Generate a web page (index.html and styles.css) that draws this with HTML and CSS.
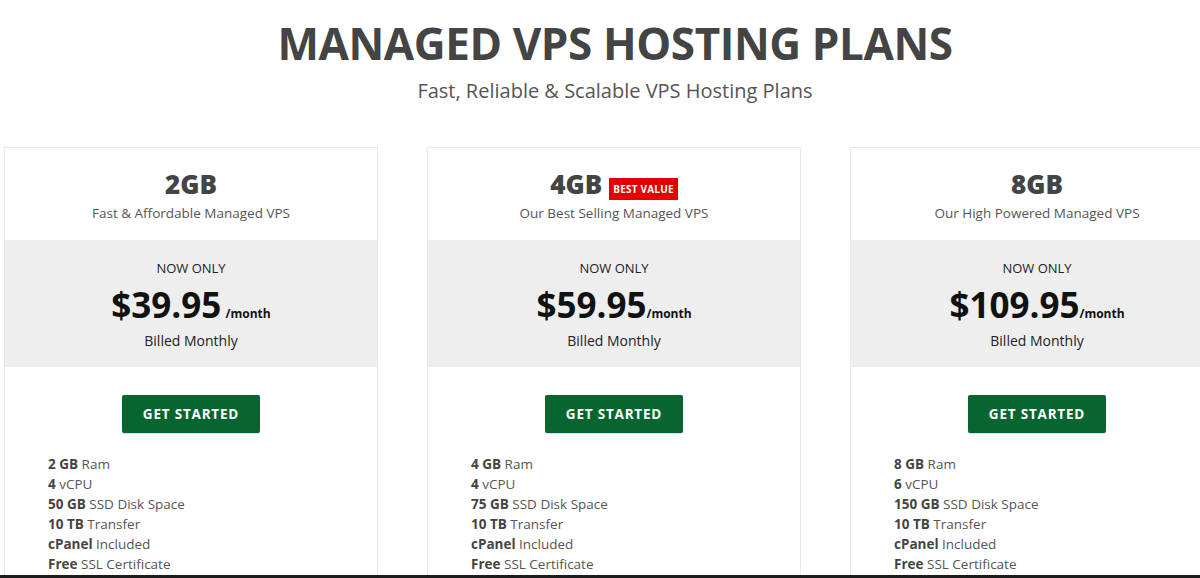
FILE: index.html
```html
<!DOCTYPE html>
<html lang="en">
<head>
<meta charset="utf-8">
<title>Managed VPS Hosting Plans</title>
<link rel="stylesheet" href="styles.css">
</head>
<body>
<main class="page">
  <header class="intro">
    <h1 class="intro-title">MANAGED VPS HOSTING PLANS</h1>
    <p class="intro-sub">Fast, Reliable &amp; Scalable VPS Hosting Plans</p>
  </header>
  <section class="plans">
    <article class="plan">
      <div class="plan-head">
        <h2 class="plan-name">2GB</h2>
        <p class="plan-desc">Fast &amp; Affordable Managed VPS</p>
      </div>
      <div class="plan-price">
        <p class="now">NOW ONLY</p>
        <p class="price"><span class="amount">$39.95</span> <span class="per">/month</span></p>
        <p class="billed">Billed Monthly</p>
      </div>
      <div class="plan-body">
        <a class="btn" href="#">GET STARTED</a>
        <ul class="features">
          <li><b>2 GB</b> Ram</li>
          <li><b>4</b> vCPU</li>
          <li><b>50 GB</b> SSD Disk Space</li>
          <li><b>10 TB</b> Transfer</li>
          <li><b>cPanel</b> Included</li>
          <li><b>Free</b> SSL Certificate</li>
        </ul>
      </div>
    </article>
    <article class="plan">
      <div class="plan-head">
        <h2 class="plan-name">4GB<span class="badge">BEST VALUE</span></h2>
        <p class="plan-desc">Our Best Selling Managed VPS</p>
      </div>
      <div class="plan-price">
        <p class="now">NOW ONLY</p>
        <p class="price"><span class="amount">$59.95</span><span class="per">/month</span></p>
        <p class="billed">Billed Monthly</p>
      </div>
      <div class="plan-body">
        <a class="btn" href="#">GET STARTED</a>
        <ul class="features">
          <li><b>4 GB</b> Ram</li>
          <li><b>4</b> vCPU</li>
          <li><b>75 GB</b> SSD Disk Space</li>
          <li><b>10 TB</b> Transfer</li>
          <li><b>cPanel</b> Included</li>
          <li><b>Free</b> SSL Certificate</li>
        </ul>
      </div>
    </article>
    <article class="plan">
      <div class="plan-head">
        <h2 class="plan-name">8GB</h2>
        <p class="plan-desc">Our High Powered Managed VPS</p>
      </div>
      <div class="plan-price">
        <p class="now">NOW ONLY</p>
        <p class="price"><span class="amount">$109.95</span><span class="per">/month</span></p>
        <p class="billed">Billed Monthly</p>
      </div>
      <div class="plan-body">
        <a class="btn" href="#">GET STARTED</a>
        <ul class="features">
          <li><b>8 GB</b> Ram</li>
          <li><b>6</b> vCPU</li>
          <li><b>150 GB</b> SSD Disk Space</li>
          <li><b>10 TB</b> Transfer</li>
          <li><b>cPanel</b> Included</li>
          <li><b>Free</b> SSL Certificate</li>
        </ul>
      </div>
    </article>
  </section>
</main>
<div class="bottom-bar"></div>
</body>
</html>
```

FILE: styles.css
```css
html, body {
  margin: 0;
  padding: 0;
  overflow: hidden;
  height: 100%;
}
body {
  font-family: "Open Sans", "Liberation Sans", sans-serif;
  background: #fff;
  color: #555;
}
p, h1, h2, ul { margin: 0; padding: 0; }

.page {
  width: 1222px;
  margin-left: 4px;
  padding-top: 15px;
}
.intro {
  text-align: center;
}
.intro-title {
  font-size: 44px;
  line-height: 56px;
  font-weight: 700;
  letter-spacing: -0.4px;
  color: #444;
}
.intro-sub {
  margin-top: 7px;
  font-size: 20px;
  line-height: 26px;
  color: #555;
}

.plans {
  display: flex;
  gap: 49px;
  margin-top: 43px;
}
.plan {
  width: 374px;
  flex: 0 0 374px;
  box-sizing: border-box;
  border: 1px solid #e8e8e8;
  height: 460px;
}
.plan-head {
  text-align: center;
  padding: 21px 0 17px;
}
.plan-name {
  font-size: 26px;
  line-height: 30px;
  font-weight: 800;
  color: #444;
  display: flex;
  justify-content: center;
  align-items: center;
}
.badge {
  display: inline-block;
  background: #e40000;
  color: #fff;
  font-size: 10px;
  line-height: 22px;
  height: 22px;
  padding: 0 4px;
  margin-left: 7px;
  font-weight: 700;
  letter-spacing: 0.2px;
  position: relative;
  top: 5px;
}
.plan-desc {
  font-size: 13.5px;
  line-height: 20px;
  color: #555;
  margin-top: 4px;
}
.plan-price {
  background: #eee;
  text-align: center;
  padding: 18px 0 16px;
  color: #222;
}
.now {
  font-size: 13px;
  line-height: 20px;
  color: #222;
}
.price {
  margin-top: 7px;
  line-height: 40px;
  color: #111;
}
.amount {
  font-size: 35px;
  font-weight: 700;
}
.per {
  font-size: 12px;
  font-weight: 700;
}
.billed {
  margin-top: -3px;
  font-size: 14px;
  line-height: 20px;
  color: #222;
}
.plan-body {
  padding-top: 28px;
}
.btn {
  display: block;
  width: 138px;
  height: 38px;
  margin: 0 auto;
  box-sizing: border-box;
  background: #07652f;
  color: #fff;
  border-radius: 2px;
  text-decoration: none;
  text-align: center;
  font-size: 13.5px;
  font-weight: 700;
  letter-spacing: 0.8px;
  line-height: 38px;
  box-shadow: 0 1px 1px rgba(0,0,0,0.15);
}
.features {
  list-style: none;
  margin-top: 21px;
  padding-left: 43px;
  font-size: 13.5px;
  line-height: 20px;
  color: #555;
}
.features b {
  color: #444;
  font-weight: 700;
}
.bottom-bar {
  position: fixed;
  left: 0;
  right: 0;
  bottom: 0;
  height: 3px;
  background: #1c1c1c;
}
```
